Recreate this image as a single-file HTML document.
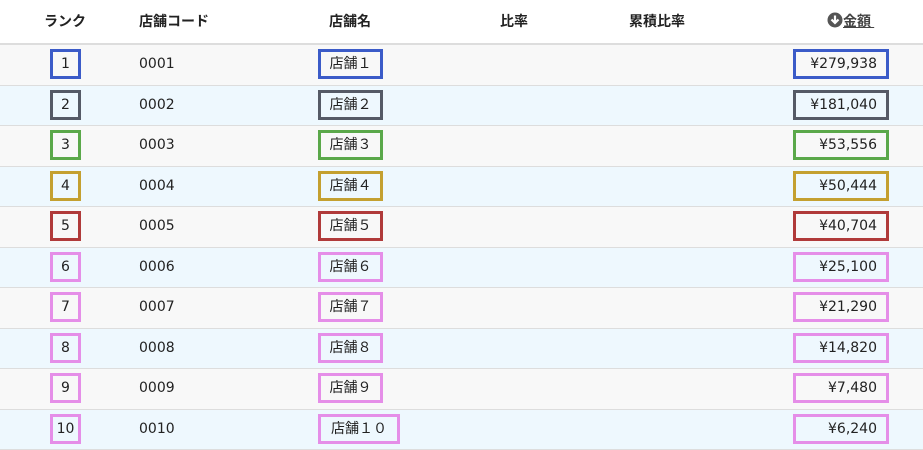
<!DOCTYPE html><html><head><meta charset="utf-8"><style>
body{margin:0;width:923px;height:450px;overflow:hidden;background:#fff;font-family:"DejaVu Sans","Noto Sans CJK JP",sans-serif;font-size:14px;color:#222}
.h{position:absolute;top:11px;font-weight:bold;font-size:14px;line-height:20px;font-family:"Noto Sans CJK JP",sans-serif}
.hl{position:absolute;top:43px;left:0;width:923px;height:2px;background:#ddd}
.r{position:absolute;left:0;width:923px;height:40.5px;border-bottom:1px solid #ddd;box-sizing:border-box}
.b{position:absolute;top:4px;height:30px;box-sizing:border-box;border:3px solid;display:flex;align-items:center;justify-content:center;font-size:14px;line-height:20px}
.rk{left:50px;width:31px}
.nm{left:318px;width:65px}
.am{left:793px;width:96px;justify-content:flex-end;padding-right:9px}
.cd{position:absolute;left:139px;top:9px;line-height:20px}
</style></head><body>
<div class="h" style="left:44px">ランク</div>
<div class="h" style="left:139px">店舗コード</div>
<div class="h" style="left:329px">店舗名</div>
<div class="h" style="left:500px">比率</div>
<div class="h" style="left:629px">累積比率</div>
<div class="h" style="left:827px;color:#444;text-decoration:underline"><svg width="16" height="16" viewBox="0 0 16 16" style="vertical-align:-2px"><circle cx="8" cy="8" r="7.5" fill="#555"/><path d="M8 3.5v7M4.5 7.5L8 11l3.5-3.5" stroke="#fff" stroke-width="2.2" fill="none"/></svg>金額&nbsp;</div>
<div class="hl"></div>
<div id="t"></div>
<script>
var c=["#3b5bc8","#555a66","#5aa84a","#c4a030","#b03a3a","#e58ee8","#e58ee8","#e58ee8","#e58ee8","#e58ee8"];
var a=["279,938","181,040","53,556","50,444","40,704","25,100","21,290","14,820","7,480","6,240"];
var h="";
for(var i=0;i<10;i++){var n=i+1,fw=n==10?"１０":String.fromCharCode(0xFF10+n);
h+='<div class="r" style="top:'+(45+i*40.5)+'px;background:'+(i%2?'#eef8fe':'#f8f8f8')+'">'
+'<div class="b rk" style="border-color:'+c[i]+'">'+n+'</div>'
+'<div class="cd">'+('000'+n).slice(-4)+'</div>'
+'<div class="b nm" style="border-color:'+c[i]+(n==10?';width:82px':'')+'">店舗'+fw+'</div>'
+'<div class="b am" style="border-color:'+c[i]+'">¥'+a[i]+'</div></div>';}
document.getElementById("t").innerHTML=h;
</script>
</body></html>
